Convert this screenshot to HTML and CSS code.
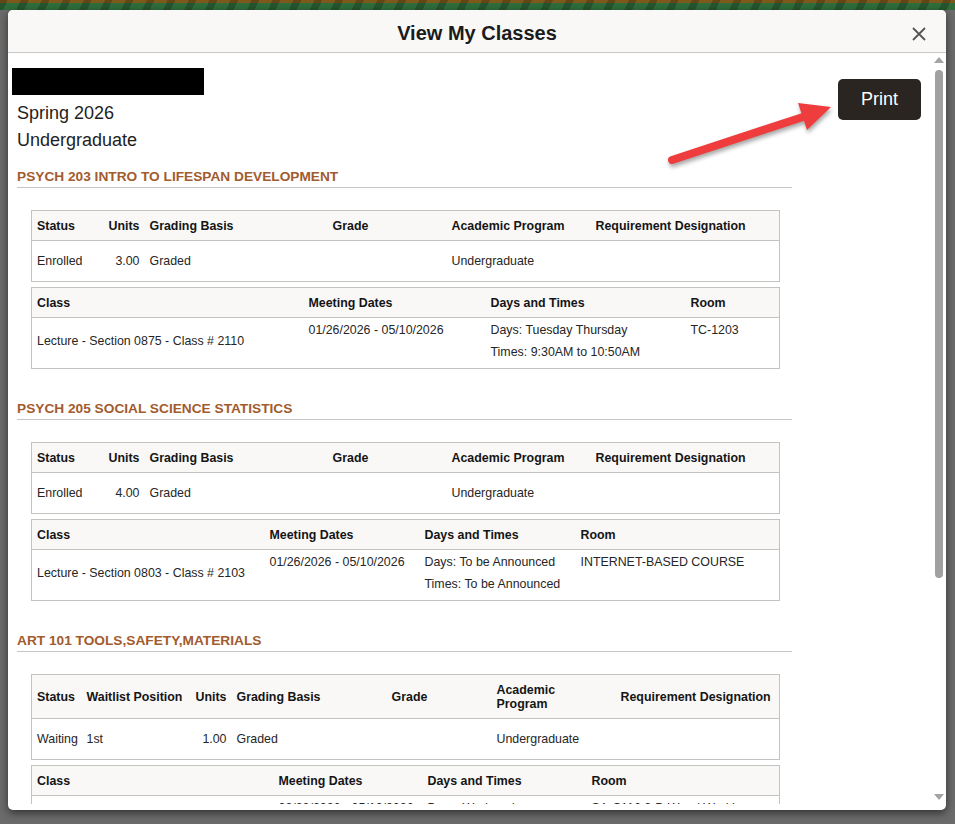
FILE: index.html
```html
<!DOCTYPE html>
<html>
<head>
  <meta charset="utf-8">
  <title>View My Classes</title>
  <link rel="stylesheet" href="styles.css">
</head>
<body>
  <div class="banner"></div>

  <div class="modal">
    <div class="modal-header">
      <span></span>
      <h1 class="modal-title">View My Classes</h1>
      <a class="close" title="Close">
        <svg width="14" height="14" viewBox="0 0 14 14"><path d="M1 1 L13 13 M13 1 L1 13" stroke="#555" stroke-width="1.8" fill="none"/></svg>
      </a>
    </div>

    <div class="modal-body">
      <div class="content">
        <div class="top">
          <div class="term">
            <div class="redacted"></div>
            <div class="term-name">Spring 2026</div>
            <div class="term-name">Undergraduate</div>
          </div>
          <button class="print">Print</button>
        </div>

        <!-- PSYCH 203 -->
        <div class="course">
          <h2>PSYCH 203 INTRO TO LIFESPAN DEVELOPMENT</h2>
          <table class="grid enrolled">
            <colgroup><col class="c-status"><col class="c-units"><col class="c-basis"><col class="c-grade"><col class="c-program"><col class="c-req"></colgroup>
            <tr><th>Status</th><th class="num">Units</th><th>Grading Basis</th><th class="center">Grade</th><th>Academic Program</th><th>Requirement Designation</th></tr>
            <tr class="row"><td>Enrolled</td><td class="num">3.00</td><td>Graded</td><td></td><td>Undergraduate</td><td></td></tr>
          </table>
          <table class="grid meeting meet-1">
            <colgroup><col class="m-class"><col class="m-dates"><col class="m-days"><col class="m-room"></colgroup>
            <tr><th>Class</th><th>Meeting Dates</th><th>Days and Times</th><th>Room</th></tr>
            <tr>
              <td class="cls">Lecture - Section 0875 - Class # 2110</td>
              <td>01/26/2026 - 05/10/2026</td>
              <td>Days: Tuesday Thursday<br>Times: 9:30AM to 10:50AM</td>
              <td>TC-1203</td>
            </tr>
          </table>
        </div>

        <!-- PSYCH 205 -->
        <div class="course">
          <h2>PSYCH 205 SOCIAL SCIENCE STATISTICS</h2>
          <table class="grid enrolled">
            <colgroup><col class="c-status"><col class="c-units"><col class="c-basis"><col class="c-grade"><col class="c-program"><col class="c-req"></colgroup>
            <tr><th>Status</th><th class="num">Units</th><th>Grading Basis</th><th class="center">Grade</th><th>Academic Program</th><th>Requirement Designation</th></tr>
            <tr class="row"><td>Enrolled</td><td class="num">4.00</td><td>Graded</td><td></td><td>Undergraduate</td><td></td></tr>
          </table>
          <table class="grid meeting meet-2">
            <colgroup><col class="m-class"><col class="m-dates"><col class="m-days"><col class="m-room"></colgroup>
            <tr><th>Class</th><th>Meeting Dates</th><th>Days and Times</th><th>Room</th></tr>
            <tr>
              <td class="cls">Lecture - Section 0803 - Class # 2103</td>
              <td>01/26/2026 - 05/10/2026</td>
              <td>Days: To be Announced<br>Times: To be Announced</td>
              <td>INTERNET-BASED COURSE</td>
            </tr>
          </table>
        </div>

        <!-- ART 101 -->
        <div class="course">
          <h2>ART 101 TOOLS,SAFETY,MATERIALS</h2>
          <table class="grid waitlist">
            <colgroup><col class="c-status"><col class="c-wait"><col class="c-units"><col class="c-basis"><col class="c-grade"><col class="c-program"><col class="c-req"></colgroup>
            <tr><th>Status</th><th>Waitlist Position</th><th class="num">Units</th><th>Grading Basis</th><th class="center">Grade</th><th>Academic<br>Program</th><th>Requirement Designation</th></tr>
            <tr class="row"><td>Waiting</td><td>1st</td><td class="num">1.00</td><td>Graded</td><td></td><td>Undergraduate</td><td></td></tr>
          </table>
          <table class="grid meeting meet-3">
            <colgroup><col class="m-class"><col class="m-dates"><col class="m-days"><col class="m-room"></colgroup>
            <tr><th>Class</th><th>Meeting Dates</th><th>Days and Times</th><th>Room</th></tr>
            <tr>
              <td class="cls">Studio - Section 0401 - Class # 1432</td>
              <td>03/23/2026 - 05/10/2026</td>
              <td>Days: Wednesday<br>Times: 6:00PM to 9:50PM</td>
              <td>SA-C116 2-D Wood Working</td>
            </tr>
          </table>
        </div>
      </div>

      <div class="scrollbar">
        <span class="arrow-up"></span>
        <span class="thumb"></span>
        <span class="spacer"></span>
        <span class="arrow-down"></span>
      </div>
    </div>
  </div>

  <!-- annotation arrow pointing at Print -->
  <svg class="pointer" width="185" height="75" viewBox="0 0 185 75">
    <line x1="12" y1="65" x2="146" y2="21" stroke="#ef3d3d" stroke-width="8" stroke-linecap="round"/>
    <polygon points="171,12 147,35 138,8" fill="#ef3d3d"/>
  </svg>
</body>
</html>
```

FILE: styles.css
```css
* {
  box-sizing: border-box;
}

body {
  margin: 0;
  height: 824px;
  overflow: hidden;
  background-color: #6b6b6b;
  font-family: "Liberation Sans", Arial, sans-serif;
  color: #222;
}

.banner {
  height: 10px;
  background:
    repeating-linear-gradient(115deg, rgba(0,0,0,.22) 0 7px, transparent 7px 19px),
    linear-gradient(to bottom, #7d5a1c 0 3px, #2f6d3b 3px);
}

/* Modal */
.modal {
  margin: 0 9px 0 8px;
  height: 800px;
  padding-bottom: 6px;
  background-color: #fff;
  border-radius: 5px;
  box-shadow: 0 3px 8px rgba(0,0,0,.55);
  display: flex;
  flex-direction: column;
}

.modal-header {
  height: 43px;
  padding-top: 5px;
  display: grid;
  grid-template-columns: 1fr auto 1fr;
  align-items: center;
  background-color: #f9f8f7;
  border-bottom: 1px solid #c9c8c6;
  border-radius: 5px 5px 0 0;
}

.modal-title {
  margin: 0;
  font-size: 20px;
  font-weight: 700;
  color: #1b1b1b;
}

.close {
  justify-self: end;
  margin-right: 20px;
  display: flex;
}

.modal-body {
  flex: 1;
  display: flex;
  min-height: 0;
}

.content {
  flex: 1;
  overflow: hidden;
  padding: 15px 10px 0 9px;
}

/* fake scrollbar */
.scrollbar {
  width: 15px;
  display: flex;
  flex-direction: column;
  align-items: center;
  padding: 4px 0 4px;
}
.arrow-up {
  border-left: 5px solid transparent;
  border-right: 5px solid transparent;
  border-bottom: 6px solid #a3a3a3;
}
.thumb {
  margin-top: 7px;
  width: 8px;
  height: 508px;
  border-radius: 4px;
  background-color: #a0a0a0;
}
.spacer {
  flex: 1;
}
.arrow-down {
  border-left: 5px solid transparent;
  border-right: 5px solid transparent;
  border-top: 6px solid #a3a3a3;
}

/* Term */
.top {
  display: flex;
  justify-content: space-between;
  align-items: flex-start;
}
.redacted {
  margin-left: -5px;
  width: 192px;
  height: 27px;
  background-color: #000;
  margin-bottom: 5px;
}
.term-name {
  font-size: 18px;
  line-height: 27px;
  color: #1e1e1e;
}
.print {
  margin-top: 11px;
  width: 83px;
  height: 41px;
  padding: 0;
  border: 0;
  border-radius: 5px;
  background-color: #2b2522;
  color: #fff;
  font-family: "Liberation Sans", Arial, sans-serif;
  font-size: 18px;
}

/* Courses */
.course {
  width: 775px;
  margin-top: 15px;
}
.course + .course {
  margin-top: 32px;
}
.course h2 {
  margin: 0;
  padding-bottom: 2px;
  font-size: 13.7px;
  line-height: 16px;
  font-weight: 700;
  color: #a25b2d;
  border-bottom: 1px solid #c8c6c3;
}

.grid {
  margin-left: 14px;
  width: 748px;
  table-layout: fixed;
  border-collapse: collapse;
  border: 1px solid #c5c3c0;
  font-size: 12.4px;
}
.enrolled, .waitlist {
  margin-top: 22px;
}
.meeting {
  margin-top: 5px;
}
.grid th {
  padding: 8px 5px 7px;
  line-height: 14px;
  text-align: left;
  font-weight: 700;
  color: #151515;
  white-space: nowrap;
  background-color: #f9f8f7;
  border-bottom: 1px solid #c5c3c0;
}
.grid td {
  padding: 0 5px;
  white-space: nowrap;
  color: #262626;
}
.grid .num {
  text-align: right;
}
.grid .center {
  text-align: center;
}
.grid .row td {
  height: 41px;
  vertical-align: middle;
}
.meeting td {
  padding: 1px 5px 5px;
  line-height: 22px;
  vertical-align: top;
}
.meeting td.cls {
  vertical-align: middle;
}

/* column widths */
.enrolled .c-status { width: 70px; }
.enrolled .c-units { width: 43px; }
.enrolled .c-basis { width: 110px; }
.enrolled .c-grade { width: 192px; }
.enrolled .c-program { width: 144px; }
.enrolled .c-req { width: 189px; }

.waitlist .c-status { width: 50px; }
.waitlist .c-wait { width: 108px; }
.waitlist .c-units { width: 42px; }
.waitlist .c-basis { width: 96px; }
.waitlist .c-grade { width: 164px; }
.waitlist .c-program { width: 124px; }
.waitlist .c-req { width: 164px; }

.meet-1 .m-class { width: 272px; }
.meet-1 .m-dates { width: 182px; }
.meet-1 .m-days { width: 200px; }
.meet-1 .m-room { width: 94px; }

.meet-2 .m-class { width: 233px; }
.meet-2 .m-dates { width: 155px; }
.meet-2 .m-days { width: 156px; }
.meet-2 .m-room { width: 204px; }

.meet-3 .m-class { width: 242px; }
.meet-3 .m-dates { width: 149px; }
.meet-3 .m-days { width: 164px; }
.meet-3 .m-room { width: 193px; }

/* red annotation arrow */
.pointer {
  position: absolute;
  left: 660px;
  top: 95px;
  overflow: visible;
  filter: drop-shadow(1px 3px 2px rgba(0,0,0,.35));
}
```
